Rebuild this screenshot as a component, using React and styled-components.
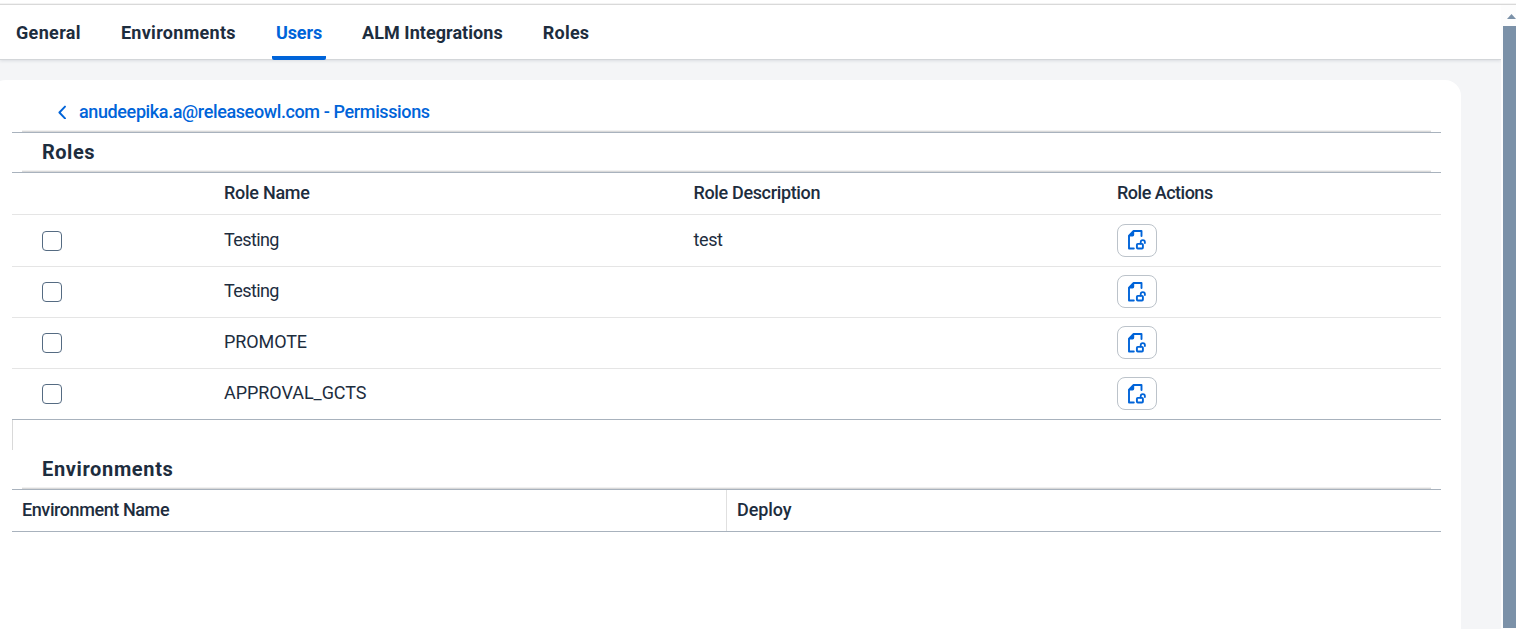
import React from "react";
import styled, { createGlobalStyle, css } from "styled-components";

const ink = "#1d2d3e";
const blue = "#0064d9";
const strongLine = "#a8b2bd";

const GlobalStyle = createGlobalStyle`
  * { box-sizing: border-box; }
  html, body { margin: 0; overflow: hidden; }
  body {
    font-family: Roboto, "Liberation Sans", sans-serif;
    font-size: 18px;
    color: ${ink};
    background: #fff;
  }
`;

const Page = styled.div`
  height: 629px;
  display: flex;
  flex-direction: column;
  overflow: hidden;
  background: #fff;
`;

const TopEdge = styled.div`
  flex: none;
  height: 5px;
  border-bottom: 1px solid #d9d9d9;
  box-shadow: inset 0 -1px 0 #f3f3f3;
`;

const Body = styled.div`
  flex: 1;
  min-height: 0;
  display: flex;
`;

const Main = styled.main`
  width: 1501px;
  display: flex;
  flex-direction: column;
  background: #f4f5f7;
  overflow: hidden;
`;

const TabBar = styled.nav`
  flex: none;
  height: 55px;
  display: flex;
  gap: 32px;
  padding-left: 12px;
  background: #fff;
  border-bottom: 1px solid #d3d6d9;
  box-shadow: 0 1px 3px rgba(34, 53, 72, 0.12);
`;

const Tab = styled.button`
  height: 55px;
  padding: 1px 4px 0;
  border: 0;
  background: none;
  font: 700 18px/50px Roboto, "Liberation Sans", sans-serif;
  letter-spacing: ${(p) => p.$spacing}px;
  white-space: nowrap;
  color: ${ink};
  ${(p) =>
    p.$active &&
    css`
      color: ${blue};
      background: linear-gradient(${blue}, ${blue}) bottom / 100% 4px no-repeat;
      border-radius: 0 0 2px 2px;
    `}
`;

const Card = styled.section`
  flex: 1;
  width: 1471px;
  margin: 20px 0 0 -10px;
  padding: 0 20px 0 22px;
  background: #fff;
  border-radius: 16px 16px 0 0;
`;

const SectionBar = styled.div`
  height: ${(p) => p.$height}px;
  border-bottom: 1px solid ${strongLine};
  padding: 0 10px;
`;

const SectionInner = styled.div`
  height: 100%;
  display: flex;
  align-items: center;
  padding: 0 20px;
  border-bottom: 1px solid #d9d9d9;
  box-shadow: inset 0 -1px 0 #f1f1f1;
`;

const BackLink = styled.a`
  display: flex;
  align-items: center;
  gap: 12px;
  padding: 12px 0 0 15px;
  color: ${blue};
  font-weight: 500;
  line-height: 20px;
  letter-spacing: ${(p) => p.$spacing}px;
`;

const SectionTitle = styled.h2`
  margin: 0;
  font-size: 20px;
  line-height: 38px;
  font-weight: 700;
  letter-spacing: ${(p) => p.$spacing}px;
`;

const RoleRow = styled.div`
  height: ${(p) => p.$height}px;
  display: grid;
  grid-template-columns: 182px 469.5px 423.5px 1fr;
  align-items: center;
  padding: 0 0 2px 30px;
  border-bottom: 1px solid ${(p) => (p.$last ? strongLine : "#e5e5e5")};
`;

const Cell = styled.span`
  font-size: 18px;
  line-height: 22px;
  font-weight: ${(p) => (p.$head ? 500 : 400)};
  letter-spacing: ${(p) => p.$spacing || 0}px;
  white-space: nowrap;
`;

const Checkbox = styled.span`
  width: 20px;
  height: 20px;
  margin-top: 2px;
  border: 1px solid #556b82;
  border-radius: 4px;
`;

const ActionButton = styled.button`
  width: 40px;
  height: 33px;
  margin-top: 1px;
  padding: 0;
  display: flex;
  align-items: center;
  justify-content: center;
  border: 1px solid #bcc3ca;
  border-radius: 8px;
  background: #fff;
`;

const Spacer = styled.div`
  height: 30px;
  border-left: 1px solid #d9d9d9;
`;

const EnvHead = styled.div`
  height: 42px;
  display: grid;
  grid-template-columns: 715px 1fr;
  border-bottom: 1px solid ${strongLine};
`;

const EnvCell = styled.div`
  display: flex;
  align-items: center;
  padding: 0 0 2px 10px;
  border-right: ${(p) => (p.$divided ? "1px solid #e0e0e0" : "0")};
`;

const Scrollbar = styled.div`
  width: 15px;
  display: flex;
  flex-direction: column;
  align-items: flex-end;
  background: #fdfdfd;
`;

const ScrollArrow = styled.div`
  width: 9px;
  height: 5px;
  margin: 9px 0 7px 0;
  background: #7b91a8;
  clip-path: polygon(50% 0, 100% 100%, 0 100%);
`;

const ScrollThumb = styled.div`
  width: 13px;
  height: 602px;
  background: #7b91a8;
`;

const BackIcon = () => (
  <svg width="10" height="14" viewBox="0 0 10 14" fill="none">
    <path d="M8 1.6 2.4 7.5 8 13.4" stroke={blue} strokeWidth="1.9" strokeLinecap="round" strokeLinejoin="round" />
  </svg>
);

const UnlockDocumentIcon = () => (
  <svg width="20" height="22" viewBox="0 0 20 22" fill="none">
    <path d="M6.8 19.5H2V6.6L6.6 2H14.5v5" stroke={blue} strokeWidth="1.9" strokeLinejoin="round" strokeLinecap="round" />
    <path d="M1.5 7.4 7.2 1.4v4.4a1.6 1.6 0 0 1-1.6 1.6z" fill={blue} />
    <rect x="9.9" y="14.9" width="6" height="4.6" rx="0.9" stroke={blue} strokeWidth="1.9" />
    <path d="M13.7 14.6v-1.3a2.1 2.1 0 0 1 4.2 0v.7" stroke={blue} strokeWidth="1.8" strokeLinecap="round" />
  </svg>
);

const tabs = [
  { label: "General", spacing: 0.34 },
  { label: "Environments", spacing: 0.3 },
  { label: "Users", spacing: -0.1, active: true },
  { label: "ALM Integrations", spacing: 0.05 },
  { label: "Roles", spacing: 0.25 },
];

const roles = [
  { name: "Testing", description: "test", spacing: -0.6 },
  { name: "Testing", description: "", spacing: -0.6 },
  { name: "PROMOTE", description: "", spacing: -0.1 },
  { name: "APPROVAL_GCTS", description: "", spacing: -0.05 },
];

export default function App() {
  return (
    <>
      <GlobalStyle />
      <Page>
        <TopEdge />
        <Body>
          <Main>
            <TabBar>
              {tabs.map((t) => (
                <Tab key={t.label} $active={t.active} $spacing={t.spacing}>
                  {t.label}
                </Tab>
              ))}
            </TabBar>
            <Card>
              <SectionBar $height={53}>
                <SectionInner>
                  <BackLink $spacing={-0.38}>
                    <BackIcon />
                    anudeepika.a@releaseowl.com - Permissions
                  </BackLink>
                </SectionInner>
              </SectionBar>
              <SectionBar $height={40}>
                <SectionInner>
                  <SectionTitle $spacing={0.5}>Roles</SectionTitle>
                </SectionInner>
              </SectionBar>
              <RoleRow $height={42}>
                <span />
                <Cell $head $spacing={-0.27}>Role Name</Cell>
                <Cell $head $spacing={-0.35}>Role Description</Cell>
                <Cell $head $spacing={-0.5}>Role Actions</Cell>
              </RoleRow>
              {roles.map((r, i) => (
                <RoleRow key={i} $height={i === 0 ? 52 : 51} $last={i === roles.length - 1}>
                  <Checkbox />
                  <Cell $spacing={r.spacing}>{r.name}</Cell>
                  <Cell $spacing={-0.4}>{r.description}</Cell>
                  <ActionButton aria-label="Role permissions">
                    <UnlockDocumentIcon />
                  </ActionButton>
                </RoleRow>
              ))}
              <Spacer />
              <SectionBar $height={40}>
                <SectionInner>
                  <SectionTitle $spacing={0.64}>Environments</SectionTitle>
                </SectionInner>
              </SectionBar>
              <EnvHead>
                <EnvCell $divided>
                  <Cell $head $spacing={-0.41}>Environment Name</Cell>
                </EnvCell>
                <EnvCell>
                  <Cell $head $spacing={-0.1}>Deploy</Cell>
                </EnvCell>
              </EnvHead>
            </Card>
          </Main>
          <Scrollbar>
            <ScrollArrow />
            <ScrollThumb />
          </Scrollbar>
        </Body>
      </Page>
    </>
  );
}
